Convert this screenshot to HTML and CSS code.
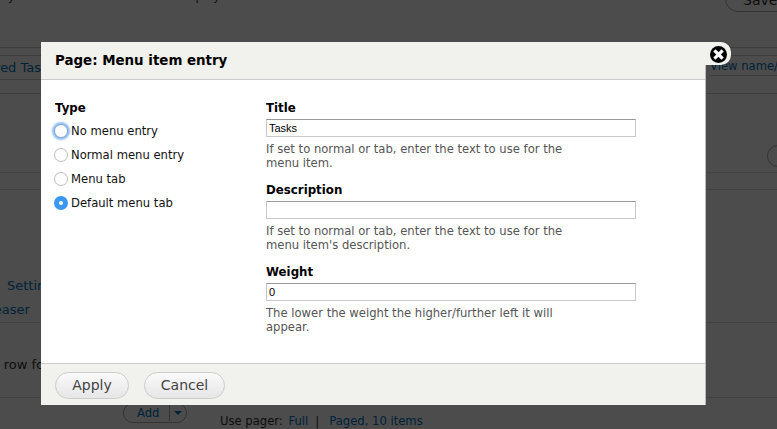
FILE: index.html
```html
<!DOCTYPE html>
<html lang="en">
<head>
  <meta charset="UTF-8" />
  <title>Page: Menu item entry</title>
  <link rel="stylesheet" href="styles.css">
</head>
<body>
  <!-- Page behind the overlay, only the edges show -->
  <div class="page">
    <div class="page-top">
      <span class="page-intro">By default the tasks will be on display</span>
      <span class="save-btn">Save</span>
    </div>
    <div class="tabs-gap"></div>
    <div class="tabs">
      <div class="tab-left"><a>Featured Tasks</a></div>
      <div class="tab-right"><a>View name/</a></div>
    </div>
    <div class="row row-a"><span class="round-btn"></span></div>
    <div class="row row-b"></div>
    <div class="row row-c">
      <div class="settings"><a>Settings</a></div>
      <div class="teaser"><a>Teaser</a></div>
    </div>
    <div class="row row-d">Style row for</div>
    <div class="page-bottom">
      <span class="add-btn"><a>Add</a><i class="add-sep"></i><i class="caret"></i></span>
      <span class="pager">Use pager: <a class="pager-full">Full</a><span class="pager-sep">|</span><a>Paged, 10 items</a></span>
    </div>
  </div>

  <div class="overlay"></div>

  <div class="dialog">
    <div class="dialog-title">Page: Menu item entry</div>
    <div class="close-wrap">
      <svg class="close-icon" width="17" height="17" viewBox="0 0 17 17">
        <circle cx="8.5" cy="8.5" r="8.5" fill="#000"/>
        <path d="M5.5 5.5l6 6M11.5 5.5l-6 6" stroke="#fff" stroke-width="3.2" stroke-linecap="square"/>
      </svg>
    </div>
    <div class="dialog-body">
      <div class="type-col">
        <div class="field-label">Type</div>
        <label class="radio radio-focus"><i class="dot"></i>No menu entry</label>
        <label class="radio"><i class="dot"></i>Normal menu entry</label>
        <label class="radio"><i class="dot"></i>Menu tab</label>
        <label class="radio radio-on"><i class="dot"></i>Default menu tab</label>
      </div>
      <div class="fields-col">
        <div class="field">
          <div class="field-label">Title</div>
          <div class="text-input">Tasks</div>
          <div class="help">If set to normal or tab, enter the text to use for the menu item.</div>
        </div>
        <div class="field">
          <div class="field-label">Description</div>
          <div class="text-input"></div>
          <div class="help">If set to normal or tab, enter the text to use for the menu item's description.</div>
        </div>
        <div class="field">
          <div class="field-label">Weight</div>
          <div class="text-input">0</div>
          <div class="help">The lower the weight the higher/further left it will appear.</div>
        </div>
      </div>
    </div>
    <div class="dialog-footer">
      <span class="btn btn-apply">Apply</span>
      <span class="btn btn-cancel">Cancel</span>
    </div>
  </div>
</body>
</html>
```

FILE: styles.css
```css
html, body {
  margin: 0;
  height: 100%;
  overflow: hidden;
}
body {
  font-family: "DejaVu Sans", sans-serif;
  font-size: 11.6px;
  color: #000;
  background: #fff;
  position: relative;
}
a { color: #0074bd; }

/* Page behind */
.page {
  height: 429px;
  display: flex;
  flex-direction: column;
  color: #333;
}
.page-top {
  height: 47px;
  flex: none;
  display: flex;
  justify-content: space-between;
  align-items: flex-start;
}
.page-intro {
  margin-top: -11px;
}
.save-btn {
  margin: -14px -12px 0 0;
  width: 64px;
  height: 26px;
  box-sizing: border-box;
  line-height: 26px;
  font-size: 14px;
  padding-left: 17px;
  border: 1px solid #aaa;
  border-radius: 13px;
}
.tabs-gap {
  height: 7px;
  flex: none;
  border-top: 1px solid #ccc;
  border-bottom: 1px solid #ccc;
}
.tabs {
  height: 37px;
  flex: none;
  display: flex;
  justify-content: space-between;
  align-items: flex-start;
  border-bottom: 1px solid #ccc;
  font-size: 13px;
}
.tab-left {
  width: 41px;
  height: 23px;
  line-height: 23px;
  white-space: nowrap;
  border-bottom: 1px solid #ccc;
  text-indent: -41px;
}
.tab-right {
  width: 67px;
  height: 19px;
  line-height: 21px;
  font-size: 11.6px;
  white-space: nowrap;
  border-bottom: 1px solid #ccc;
}
.row {
  box-sizing: border-box;
  flex: none;
  border-bottom: 1px solid #dedede;
}
.row-a { height: 79px; display: flex; justify-content: flex-end; }
.row-b { height: 17px; }
.row-c { height: 133px; padding-top: 88px; font-size: 13px; }
.row-d { height: 75px; padding-top: 34px; font-size: 13px; text-indent: -33px; white-space: nowrap; }
.round-btn {
  margin: 51px -12px 0 0;
  width: 22px;
  height: 22px;
  box-sizing: border-box;
  border: 1px solid #aaa;
  border-radius: 50%;
}
.settings { padding-left: 7px; line-height: 16px; }
.teaser { margin-left: -12px; margin-top: 8px; line-height: 16px; }
.page-bottom {
  flex: none;
  height: 32px;
  display: flex;
  align-items: flex-start;
  font-size: 11.6px;
}
.add-btn {
  margin: 5px 0 0 123px;
  height: 20px;
  width: 64px;
  box-sizing: border-box;
  border: 1px solid #aaa;
  border-radius: 10px;
  display: flex;
  align-items: center;
  padding-left: 13px;
}
.add-sep {
  width: 1px;
  height: 16px;
  margin-left: 10px;
  background: #aaa;
}
.caret {
  margin-left: 4px;
  border: 4px solid transparent;
  border-top: 4px solid #0074bd;
  border-bottom: 0;
}
.pager {
  margin: 16px 0 0 33px;
  white-space: nowrap;
}
.pager-full { margin-left: 2px; }
.pager-sep { margin: 0 10px 0 7px; }

.overlay {
  position: absolute;
  inset: 0;
  background: rgba(0, 0, 0, 0.7);
}

/* Dialog */
.dialog {
  position: absolute;
  left: 41px;
  top: 42px;
  width: 665px;
  height: 363px;
  background: #fff;
  display: flex;
  flex-direction: column;
  border-right: 1px solid #bbb;
  box-sizing: border-box;
}
.dialog-title {
  height: 37px;
  flex: none;
  line-height: 38px;
  padding-left: 14px;
  background: #f1f1ed;
  border-bottom: 1px solid #ccc;
  font-size: 13.4px;
  font-weight: bold;
}
.close-wrap {
  position: absolute;
  right: -26px;
  top: 0;
  width: 26px;
  height: 23px;
  background: #f1f1ed;
  border-radius: 0 10px 10px 0;
}
.close-icon {
  position: absolute;
  left: 5px;
  top: 4px;
}
.dialog-body {
  flex: 1;
  display: flex;
  padding: 21px 0 0 14px;
}
.type-col {
  width: 211px;
  flex: none;
}
.fields-col {
  width: 370px;
}
.field-label {
  font-weight: bold;
  font-size: 11.8px;
  line-height: 15px;
  margin-bottom: 3px;
}
.radio {
  display: flex;
  align-items: center;
  gap: 3px;
  height: 24px;
  color: #111;
}
.dot {
  width: 14px;
  height: 14px;
  margin-left: -1px;
  box-sizing: border-box;
  border: 1px solid #bbb;
  border-radius: 50%;
  background: #fff;
  flex: none;
}
.radio-focus .dot {
  border-color: #7fa6d6;
  box-shadow: 0 0 2px 2px #8fbdf0;
}
.radio-on .dot {
  border: 5px solid #3a97f2;
}
.field {
  margin-bottom: 13px;
}
.text-input {
  height: 18px;
  box-sizing: border-box;
  border: 1px solid #c8c8c8;
  border-top-color: #999;
  font-family: "Liberation Sans", sans-serif;
  font-size: 11px;
  line-height: 16px;
  padding-left: 2px;
}
.help {
  margin-top: 5px;
  width: 315px;
  line-height: 14px;
  color: #555;
}

.dialog-footer {
  height: 42px;
  flex: none;
  box-sizing: border-box;
  border-top: 1px solid #ccc;
  background: #f1f1ed;
  padding: 8px 0 0 14px;
  display: flex;
  gap: 15px;
}
.btn {
  height: 27px;
  box-sizing: border-box;
  line-height: 25px;
  border: 1px solid #ccc;
  border-radius: 14px;
  background: linear-gradient(#fafafa, #e6e6e6);
  text-align: center;
  font-size: 14px;
  color: #444;
}
.btn-apply { width: 74px; }
.btn-cancel { width: 81px; }
```
